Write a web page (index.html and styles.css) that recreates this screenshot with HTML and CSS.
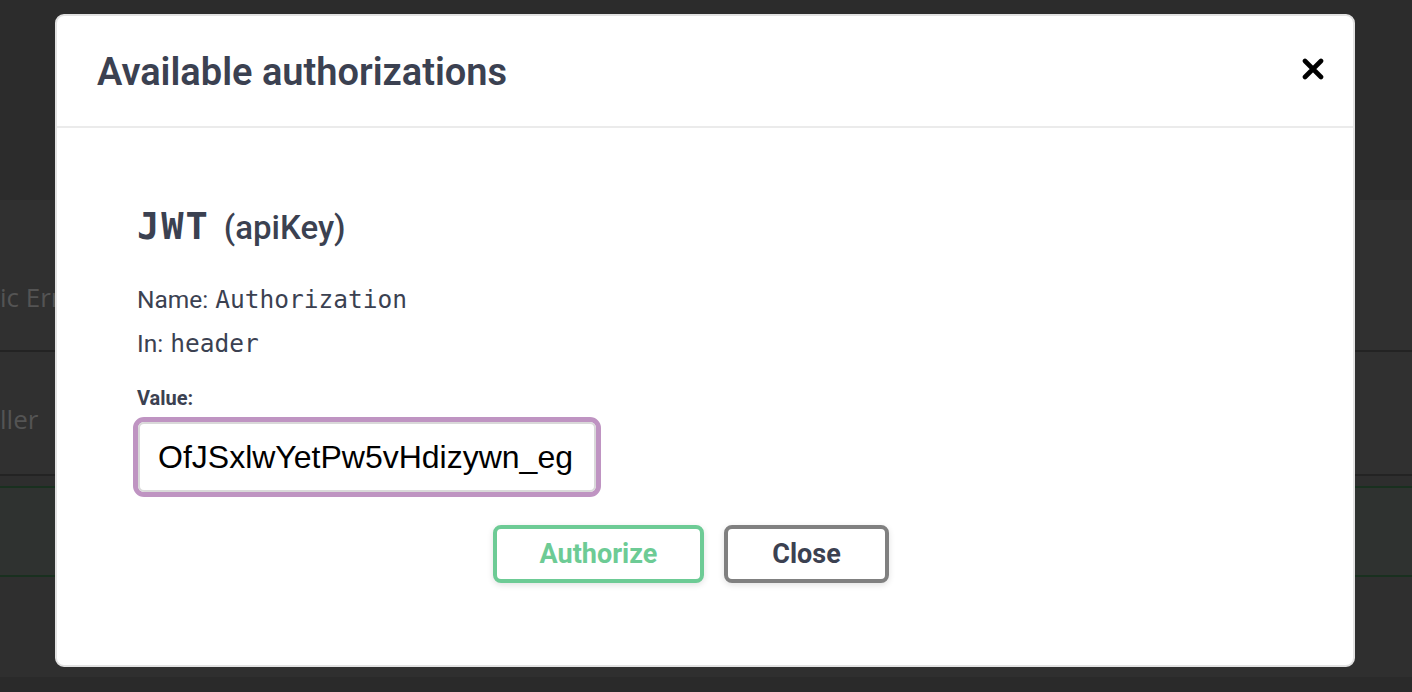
FILE: index.html
```html
<!DOCTYPE html>
<html>
<head>
<meta charset="utf-8">
<link rel="stylesheet" href="styles.css">
</head>
<body>
<div class="page">
  <div class="page-top"></div>
  <div class="tag-row tag-row-1"><span class="tag-name">ic Error</span></div>
  <div class="tag-row tag-row-2"><span class="tag-name">ller</span></div>
  <div class="spacer"></div>
  <div class="opblock"></div>
  <div class="page-rest"></div>
  <div class="page-foot"></div>
</div>

<div class="modal">
  <div class="modal-header">
    <h3 class="modal-title">Available authorizations</h3>
    <button class="close-x" aria-label="close">
      <svg width="22" height="22" viewBox="0 0 22 22"><path d="M3 3 L19 19 M19 3 L3 19" stroke="#000" stroke-width="4.6" stroke-linecap="round"/></svg>
    </button>
  </div>
  <div class="modal-body">
    <div class="auth-section">
      <h4 class="auth-title"><code class="mono-title">JWT</code><span class="auth-type">(apiKey)</span></h4>
      <p class="info-line"><span>Name:</span><code class="mono">Authorization</code></p>
      <p class="info-line"><span>In:</span><code class="mono">header</code></p>
      <label class="value-label">Value:</label>
      <div class="input-wrap"><input class="value-input" type="text" value="OfJSxlwYetPw5vHdizywn_eg"></div>
      <div class="btn-wrap">
        <button class="btn btn-auth">Authorize</button>
        <button class="btn btn-done">Close</button>
      </div>
    </div>
  </div>
</div>
</body>
</html>
```

FILE: styles.css
```css
* { box-sizing: border-box; }
html, body { margin: 0; padding: 0; }
body {
  width: 1412px;
  height: 692px;
  overflow: hidden;
  background: #303030;
  font-family: Roboto, "Noto Sans", sans-serif;
  position: relative;
}
.page { display: flex; flex-direction: column; height: 692px; }
.page-top { height: 200px; background: #2c2c2c; }
.tag-row {
  display: flex;
  align-items: center;
  border-bottom: 2px solid #232323;
  background: #303030;
}
.tag-row-1 { height: 152px; padding-top: 44px; }
.tag-row-2 { height: 124px; padding-top: 12px; }
.tag-name {
  font-family: "Open Sans", sans-serif;
  font-size: 26px;
  color: #545454;
  white-space: nowrap;
}
.spacer { height: 10px; background: #2e2e2e; }
.opblock {
  height: 91px;
  border-top: 2px solid #19301f;
  border-bottom: 2px solid #19301f;
  background: #2f3230;
}
.page-rest { height: 100px; background: #2f2f2f; }
.page-foot { flex: 1; background: #2a2a2a; }

.modal {
  position: absolute;
  left: 55px;
  top: 14px;
  width: 1300px;
  height: 653px;
  background: #fff;
  border: 2px solid #e2e2e2;
  border-radius: 9px;
  display: flex;
  flex-direction: column;
}
.modal-header {
  height: 112px;
  flex: none;
  display: flex;
  align-items: center;
  justify-content: space-between;
  padding: 0 29px 0 40px;
  border-bottom: 2px solid #ebebeb;
}
.modal-title {
  margin: 0;
  font-family: Roboto, sans-serif;
  font-weight: 600;
  font-size: 38px;
  letter-spacing: 0px;
  color: #3b4151;
  padding-top: 2px;
}
.close-x {
  border: 0;
  background: none;
  padding: 0;
  width: 22px;
  height: 22px;
  display: flex;
  margin-top: -4px;
}
.modal-body { flex: 1; padding: 77px 80px 0 80px; }
.auth-title {
  margin: 0 0 28px;
  font-weight: 600;
  color: #3b4151;
  display: flex;
  align-items: baseline;
  gap: 14px;
  line-height: 44px;
}
.mono-title {
  font-family: "DejaVu Sans Mono", monospace;
  font-weight: 700;
  font-size: 37px;
  letter-spacing: 2px;
}
.auth-type {
  font-family: Roboto, sans-serif;
  font-size: 33px;
  font-weight: 500;
}
.info-line {
  margin: 0;
  display: flex;
  align-items: baseline;
  gap: 7px;
  font-family: Roboto, sans-serif;
  font-size: 24.5px;
  line-height: 44px;
  color: #3b4151;
}
.mono {
  font-family: "DejaVu Sans Mono", monospace;
  font-size: 24.5px;
}
.value-label {
  display: block;
  margin-top: 20px;
  font-family: Roboto, sans-serif;
  font-weight: 700;
  font-size: 20px;
  color: #3b4151;
  line-height: 24px;
}
.input-wrap {
  margin-top: 7px;
  margin-left: -4px;
  width: 468px;
  height: 80px;
  border: 5px solid #bf94c2;
  border-radius: 11px;
  display: flex;
}
.value-input {
  flex: 1;
  min-width: 0;
  height: 100%;
  border: 2px solid #d9d9d9;
  border-radius: 6px;
  padding: 0 0 0 18px;
  font-family: "Liberation Sans", Arial, sans-serif;
  font-size: 32px;
  color: #000;
  outline: none;
  background: #fff;
}
.btn-wrap {
  display: flex;
  justify-content: center;
  gap: 20px;
  margin-top: 28px;
  margin-left: -80px;
  margin-right: -80px;
}
.btn {
  height: 58px;
  border-radius: 8px;
  border: 4px solid;
  background: #fff;
  font-family: Roboto, sans-serif;
  font-weight: 700;
  font-size: 27px;
  box-shadow: 0 2px 6px rgba(0,0,0,.12);
  padding: 0;
}
.btn-auth { width: 211px; border-color: #6dcb95; color: #6dcb95; }
.btn-done { width: 165px; border-color: #808080; color: #3b4151; margin-right: 28px; }
```
